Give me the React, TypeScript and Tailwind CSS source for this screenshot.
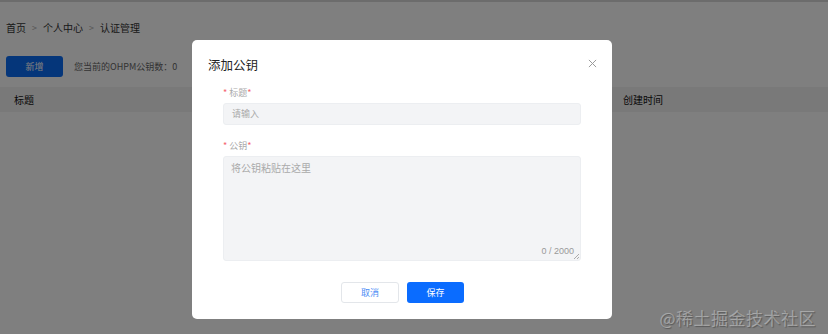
import React from "react";

const F = { fontFamily: '"Noto Sans CJK SC", "Noto Sans", sans-serif' };

export default function App() {
  return (
    <div className="relative w-[828px] h-[334px] overflow-hidden bg-white text-[#333]" style={F}>
      {/* page */}
      <div className="flex flex-col">
        <div className="h-[2px] bg-[#d8d8d8]" />
        <div className="flex items-center gap-[6px] pl-[6px] pt-[16px] h-[35px] text-[10px] text-[#333]">
          <span>首页</span>
          <span className="text-[#aaa] text-[9px]">&gt;</span>
          <span>个人中心</span>
          <span className="text-[#aaa] text-[9px]">&gt;</span>
          <span>认证管理</span>
        </div>
        <div className="flex items-center mt-[19px] pl-[6px] gap-[11px]">
          <button className="w-[57px] h-[21px] rounded-[3px] bg-[#0a6cf5] text-white text-[9px]">新增</button>
          <span className="text-[9px] text-[#666]">您当前的OHPM公钥数：0</span>
        </div>
        <div className="mt-[10px] h-[25px] bg-[#f2f2f2] flex items-center text-[10px] text-[#111]">
          <span className="pl-[14px] w-[623px]">标题</span>
          <span>创建时间</span>
        </div>
      </div>

      {/* overlay */}
      <div className="absolute inset-0 bg-black/50" />

      {/* modal */}
      <div className="absolute left-[192px] top-[40px] w-[420px] h-[279px] bg-white rounded-[5px] flex flex-col">
        <div className="flex items-center justify-between pl-[16px] pr-[15px] pt-[16px]">
          <span className="text-[12.5px] text-[#222]">添加公钥</span>
          <svg width="9" height="9" viewBox="0 0 10 10" className="mt-[-4px]">
            <path d="M1 1L9 9M9 1L1 9" stroke="#9a9a9a" strokeWidth="1.1" />
          </svg>
        </div>
        <div className="flex flex-col px-[31px] mt-[11px]">
          <div className="text-[9px] text-[#aaa] leading-[14px]">
            <span className="text-[#f5646d]">* </span>标题<span className="text-[#f5646d]">*</span>
          </div>
          <div className="mt-[3px] h-[22px] rounded-[3px] bg-[#f3f4f6] border border-[#eceef1] flex items-center pl-[8px] text-[9px] text-[#aaa]">
            请输入
          </div>
          <div className="mt-[14px] text-[9px] text-[#aaa] leading-[14px]">
            <span className="text-[#f5646d]">* </span>公钥<span className="text-[#f5646d]">*</span>
          </div>
          <div className="relative mt-[3px] h-[105px] rounded-[3px] bg-[#f3f4f6] border border-[#eceef1] pl-[7px] pt-[3px] text-[10px] text-[#aaa]">
            将公钥粘贴在这里
            <span className="absolute right-[6px] bottom-[1px] text-[9px] text-[#999]" style={{ fontFamily: '"Liberation Sans", sans-serif' }}>0 / 2000</span>
            <svg width="6" height="6" viewBox="0 0 6 6" className="absolute right-[1px] bottom-[1px]">
              <path d="M6 1L1 6M6 4L4 6" stroke="#999" strokeWidth="0.8" />
            </svg>
          </div>
        </div>
        <div className="flex justify-center gap-[8px] mt-[21px] pl-[1px]">
          <button className="w-[58px] h-[21px] rounded-[3px] border border-[#e3e6ea] bg-white text-[9px] text-[#4d8ef5]">取消</button>
          <button className="w-[57px] h-[21px] rounded-[3px] bg-[#0a6cff] text-[9px] text-white">保存</button>
        </div>
      </div>

      {/* watermark */}
      <div className="absolute right-[12px] bottom-[4px] text-[17px] text-white/35 tracking-[0.5px]" style={{ ...F, textShadow: "1px 1px 1px rgba(0,0,0,0.3)" }}>
        @稀土掘金技术社区
      </div>
    </div>
  );
}
